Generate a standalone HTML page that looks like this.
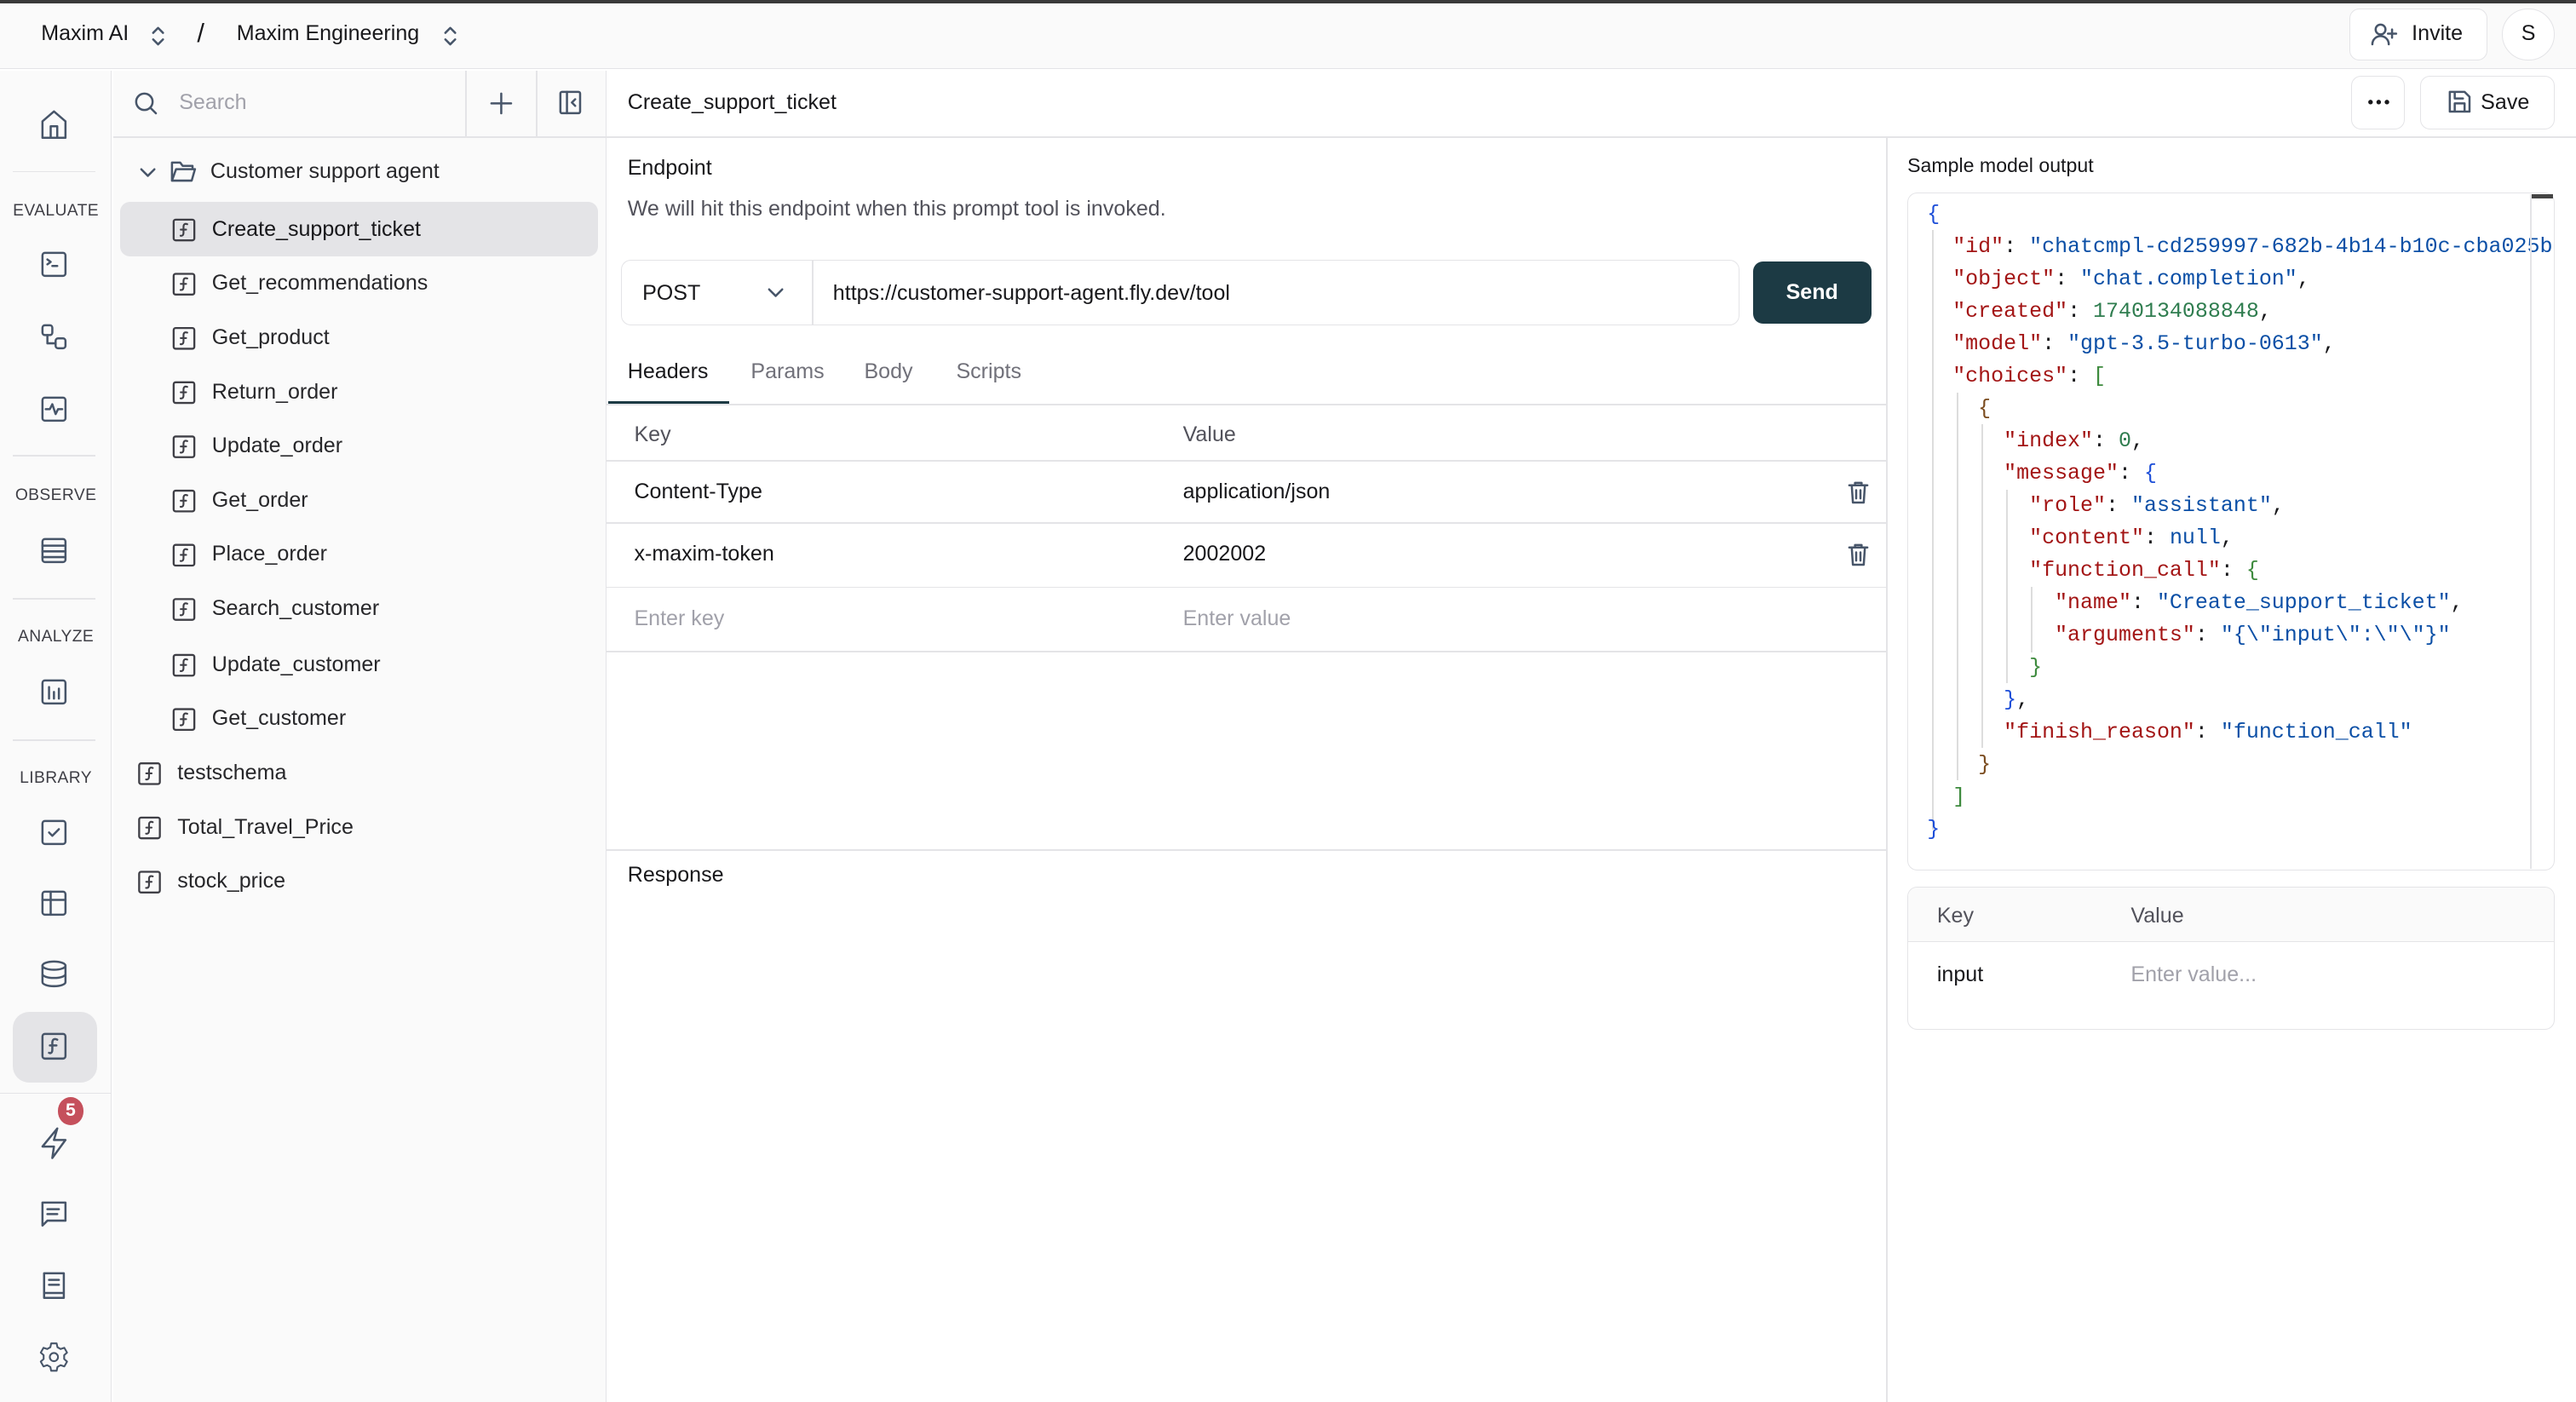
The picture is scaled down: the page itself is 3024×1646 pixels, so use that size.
<!DOCTYPE html>
<html><head><meta charset="utf-8"><style>
*{box-sizing:border-box;margin:0;padding:0}
html,body{width:3024px;height:1646px;overflow:hidden;background:#fff}
#r{zoom:1.9286;width:1568px;height:853.5px;position:relative;font-family:"Liberation Sans",sans-serif;color:#18181b;font-size:13px}
.a{position:absolute}
.ic{stroke:#475569;fill:none;stroke-width:1.3;stroke-linecap:round;stroke-linejoin:round}
.side .it{position:absolute;left:104px;font-size:13px;color:#27272a}
.lbl{position:absolute;left:0;width:68px;text-align:center;font-size:10px;color:#3f3f46;letter-spacing:.2px}
.hr{position:absolute;left:8px;width:50px;height:1px;background:#e4e4e7}
.code{position:absolute;font-family:"Liberation Mono",monospace;font-size:12.95px;line-height:19.7px;white-space:pre;color:#18181b}
.k{color:#a31515}.s{color:#0b4fa6}.n{color:#2f7d4f}.b1{color:#1d4ed8}.b2{color:#7a4b1e}.b3{color:#3d8a3d}
</style></head><body><div id="r">
<div class="a" style="left:0;top:0;width:1568px;height:2px;background:#3a3a3a"></div>
<div class="a" style="left:0;top:2px;width:1568px;height:40px;background:#fafafa;border-bottom:1px solid #e4e4e7"></div>
<div class="a" style="left:25px;top:13px;font-size:13px;font-weight:500">Maxim AI</div>
<svg class="a" style="left:90px;top:14px" width="12" height="16" viewBox="0 0 12 16"><path class="ic" d="M3 6l3-3 3 3M3 10l3 3 3-3"/></svg>
<div class="a" style="left:120px;top:11px;font-size:16px">/</div>
<div class="a" style="left:144px;top:13px;font-size:13px;font-weight:500">Maxim Engineering</div>
<svg class="a" style="left:268px;top:14px" width="12" height="16" viewBox="0 0 12 16"><path class="ic" d="M3 6l3-3 3 3M3 10l3 3 3-3"/></svg>
<div class="a" style="left:1430px;top:5px;width:84px;height:32px;border:1px solid #e4e4e7;border-radius:6px;background:#fff"></div>
<svg class="a" style="left:1443px;top:13px" width="17" height="16" viewBox="0 0 17 16"><circle class="ic" stroke="#18181b" cx="6" cy="5" r="3"/><path class="ic" stroke="#18181b" d="M1 14c0-3 2.5-5 5-5s5 2 5 5M13 5v5M10.5 7.5h5"/></svg>
<div class="a" style="left:1468px;top:13px;font-size:13px;font-weight:500">Invite</div>
<div class="a" style="left:1523px;top:5px;width:32px;height:32px;border:1px solid #e4e4e7;border-radius:50%;background:#fff;text-align:center;line-height:30px;font-size:13px;font-weight:500">S</div>

<div class="a" style="left:0;top:43px;width:68px;height:811px;background:#fafafa;border-right:1px solid #e4e4e7"></div>
<svg class="a" style="left:24px;top:66px" width="18" height="20" viewBox="0 0 18 20"><path class="ic" d="M2 8l7-6 7 6v10H2zM7 18v-7h4v7"/></svg>
<div class="hr" style="top:104px"></div>
<div class="lbl" style="top:123px">EVALUATE</div>
<svg class="a" style="left:24px;top:152px" width="18" height="18" viewBox="0 0 18 18"><rect class="ic" x="2" y="2" width="14" height="14" rx="1.5"/><path class="ic" d="M5 6l2 1.5L5 9M8 10h3"/></svg>
<svg class="a" style="left:24px;top:196px" width="18" height="18" viewBox="0 0 18 18"><rect class="ic" x="2" y="2" width="6" height="6" rx="1.5"/><rect class="ic" x="10" y="10" width="6" height="6" rx="1.5"/><path class="ic" d="M5 8v5h5"/></svg>
<svg class="a" style="left:24px;top:240px" width="18" height="18" viewBox="0 0 18 18"><rect class="ic" x="2" y="2" width="14" height="14" rx="1.5"/><path class="ic" d="M4 9h2.5l1.5-3 2 6 1.5-3H14"/></svg>
<div class="hr" style="top:277px"></div>
<div class="lbl" style="top:296px">OBSERVE</div>
<svg class="a" style="left:24px;top:326px" width="18" height="18" viewBox="0 0 18 18"><rect class="ic" x="2" y="2" width="14" height="14" rx="1.5"/><path class="ic" d="M2 6h14M2 9.5h14M2 13h14"/></svg>
<div class="hr" style="top:364px"></div>
<div class="lbl" style="top:382px">ANALYZE</div>
<svg class="a" style="left:24px;top:412px" width="18" height="18" viewBox="0 0 18 18"><rect class="ic" x="2" y="2" width="14" height="14" rx="1.5"/><path class="ic" d="M6 6v7M9 9v4M12 7v6"/></svg>
<div class="hr" style="top:450px"></div>
<div class="lbl" style="top:468px">LIBRARY</div>
<svg class="a" style="left:24px;top:498px" width="18" height="18" viewBox="0 0 18 18"><rect class="ic" x="2" y="2" width="14" height="14" rx="1.5"/><path class="ic" d="M6 9l2 2 4-4"/></svg>
<svg class="a" style="left:24px;top:541px" width="18" height="18" viewBox="0 0 18 18"><rect class="ic" x="2" y="2" width="14" height="14" rx="1.5"/><path class="ic" d="M2 7h14M7 2v14"/></svg>
<svg class="a" style="left:24px;top:584px" width="18" height="18" viewBox="0 0 18 18"><ellipse class="ic" cx="9" cy="4" rx="7" ry="2.5"/><path class="ic" d="M2 4v10c0 1.4 3 2.5 7 2.5s7-1.1 7-2.5V4M2 9c0 1.4 3 2.5 7 2.5s7-1.1 7-2.5"/></svg>
<div class="a" style="left:8px;top:616px;width:51px;height:43px;background:#e4e4e7;border-radius:10px"></div>
<svg class="a" style="left:24px;top:628px" width="18" height="18" viewBox="0 0 18 18"><rect class="ic" x="2" y="1.5" width="14" height="15" rx="1.5"/><path class="ic" d="M11 5c-2-1-3 0-3 2v4c0 2-1 2.5-2 2M6.5 8.5h4"/></svg>
<div class="a" style="left:0;top:665px;width:68px;height:1px;background:#e4e4e7"></div>
<div class="a" style="left:35px;top:668px;width:16px;height:17px;border-radius:50%;background:#c5505c;color:#fff;font-size:11px;font-weight:bold;text-align:center;line-height:17px">5</div>
<svg class="a" style="left:24px;top:685px" width="18" height="22" viewBox="0 0 18 22"><path class="ic" d="M11 2L2 13h7l-1 7 8-11H9z"/></svg>
<svg class="a" style="left:24px;top:730px" width="18" height="18" viewBox="0 0 18 18"><path class="ic" d="M2 2h14v11H5l-3 3zM5 6h7M5 9h6"/></svg>
<svg class="a" style="left:24px;top:773px" width="18" height="19" viewBox="0 0 18 19"><path class="ic" d="M3 2h12v15H3zM3 14h12M6 6h6M6 9h6"/></svg>
<svg class="a" style="left:23px;top:816px" width="20" height="20" viewBox="0 0 24 24"><path class="ic" d="M10 2h4l.6 2.8 2.3 1.3 2.7-.9 2 3.5-2.1 1.9v2.8l2.1 1.9-2 3.5-2.7-.9-2.3 1.3L14 22h-4l-.6-2.8-2.3-1.3-2.7.9-2-3.5 2.1-1.9v-2.8L2.4 8.7l2-3.5 2.7.9 2.3-1.3z"/><circle class="ic" cx="12" cy="12" r="3"/></svg>

<div class="a" style="left:69px;top:43px;width:300px;height:811px;background:#fafafa;border-right:1px solid #e4e4e7"></div>
<div class="a" style="left:69px;top:83px;width:300px;height:1px;background:#e4e4e7"></div>
<div class="a" style="left:283px;top:43px;width:1px;height:40px;background:#e4e4e7"></div>
<div class="a" style="left:326px;top:43px;width:1px;height:40px;background:#e4e4e7"></div>
<svg class="a" style="left:81px;top:55px" width="16" height="16" viewBox="0 0 16 16"><circle class="ic" stroke="#18181b" stroke-width="1.5" cx="7" cy="7" r="5"/><path class="ic" stroke="#18181b" stroke-width="1.5" d="M11 11l3 3"/></svg>
<div class="a" style="left:109px;top:55px;color:#a1a1aa;font-size:13px">Search</div>
<svg class="a" style="left:297px;top:55px" width="16" height="16" viewBox="0 0 16 16"><path class="ic" stroke="#18181b" stroke-width="1.5" d="M8 2v12M2 8h12"/></svg>
<svg class="a" style="left:339px;top:54px" width="16" height="17" viewBox="0 0 16 17"><rect class="ic" stroke="#18181b" stroke-width="1.4" x="2" y="2" width="12" height="13" rx="1"/><path class="ic" stroke="#18181b" stroke-width="1.4" d="M6 2v13M11 6.5L9 8.5l2 2"/></svg>
<div class="side">
<svg class="a" style="left:84px;top:99px" width="12" height="12" viewBox="0 0 12 12"><path class="ic" d="M2 4l4 4 4-4"/></svg>
<svg class="a" style="left:103px;top:97px" width="17" height="15" viewBox="0 0 17 15"><path class="ic" d="M1.5 2h5l1.5 2h6v2M1.5 2v11h12l2-7H4l-2.5 7"/></svg>
<div class="it" style="left:128px;top:97px">Customer support agent</div>
<div class="a" style="left:73px;top:123px;width:291px;height:33px;background:#e4e4e7;border-radius:6px"></div>
<div class="it" style="left:129px;top:132px;color:#18181b;font-weight:500">Create_support_ticket</div>
<div class="it" style="left:129px;top:165px">Get_recommendations</div>
<div class="it" style="left:129px;top:198px">Get_product</div>
<div class="it" style="left:129px;top:231px">Return_order</div>
<div class="it" style="left:129px;top:264px">Update_order</div>
<div class="it" style="left:129px;top:297px">Get_order</div>
<div class="it" style="left:129px;top:330px">Place_order</div>
<div class="it" style="left:129px;top:363px">Search_customer</div>
<div class="it" style="left:129px;top:397px">Update_customer</div>
<div class="it" style="left:129px;top:430px">Get_customer</div>
<div class="it" style="left:108px;top:463px">testschema</div>
<div class="it" style="left:108px;top:496px">Total_Travel_Price</div>
<div class="it" style="left:108px;top:529px">stock_price</div>
</div>
<svg class="a" style="left:0;top:0" width="368" height="560" viewBox="0 0 368 560">
<defs><g id="f"><rect x="0.7" y="0.7" width="12.6" height="12.6" rx="1.2" fill="none" stroke="#3f3f46" stroke-width="1.2"/><path d="M9 3.5c-1.6-.6-2.3.2-2.3 1.6v3.6c0 1.5-.8 2-1.8 1.8M5 6.8h3.3" fill="none" stroke="#3f3f46" stroke-width="1.1" stroke-linecap="round"/></g></defs>
<use href="#f" x="105" y="133"/><use href="#f" x="105" y="166"/><use href="#f" x="105" y="199"/><use href="#f" x="105" y="232"/><use href="#f" x="105" y="265"/><use href="#f" x="105" y="298"/><use href="#f" x="105" y="331"/><use href="#f" x="105" y="364"/><use href="#f" x="105" y="398"/><use href="#f" x="105" y="431"/><use href="#f" x="84" y="464"/><use href="#f" x="84" y="497"/><use href="#f" x="84" y="530"/>
</svg>

<div class="a" style="left:369px;top:83px;width:1199px;height:1px;background:#e4e4e7"></div>
<div class="a" style="left:382px;top:55px;font-size:13px;font-weight:500">Create_support_ticket</div>
<div class="a" style="left:1431px;top:46px;width:33px;height:33px;border:1px solid #e4e4e7;border-radius:6px"></div>
<svg class="a" style="left:1440px;top:60px" width="16" height="4" viewBox="0 0 16 4"><circle cx="3" cy="2" r="1.4" fill="#18181b"/><circle cx="8" cy="2" r="1.4" fill="#18181b"/><circle cx="13" cy="2" r="1.4" fill="#18181b"/></svg>
<div class="a" style="left:1473px;top:46px;width:82px;height:33px;border:1px solid #e4e4e7;border-radius:6px"></div>
<svg class="a" style="left:1489px;top:54px" width="16" height="16" viewBox="0 0 16 16"><path class="ic" stroke="#18181b" stroke-width="1.4" d="M2 2h9l3 3v9H2zM5 2v4h5M5 14V9h6v5"/></svg>
<div class="a" style="left:1510px;top:55px;font-size:13px;font-weight:500">Save</div>

<div class="a" style="left:382px;top:95px;font-size:13px;font-weight:500">Endpoint</div>
<div class="a" style="left:382px;top:120px;font-size:13px;color:#52525b">We will hit this endpoint when this prompt tool is invoked.</div>
<div class="a" style="left:378px;top:158px;width:681px;height:40px;border:1px solid #e4e4e7;border-radius:6px"></div>
<div class="a" style="left:494px;top:158px;width:1px;height:40px;background:#e4e4e7"></div>
<div class="a" style="left:391px;top:171px;font-size:13px">POST</div>
<svg class="a" style="left:466px;top:172px" width="12" height="12" viewBox="0 0 12 12"><path class="ic" d="M2 4l4 4 4-4"/></svg>
<div class="a" style="left:507px;top:171px;font-size:13px">https://customer-support-agent.fly.dev/tool</div>
<div class="a" style="left:1067px;top:159px;width:72px;height:38px;background:#1c3a44;border-radius:6px;color:#fff;font-weight:bold;font-size:13px;text-align:center;line-height:38px">Send</div>

<div class="a" style="left:369px;top:246px;width:779px;height:1px;background:#e4e4e7"></div>
<div class="a" style="left:382px;top:219px;font-size:13px;font-weight:500">Headers</div>
<div class="a" style="left:370px;top:244px;width:74px;height:2px;background:#1c3a44"></div>
<div class="a" style="left:457px;top:219px;font-size:13px;color:#71717a">Params</div>
<div class="a" style="left:526px;top:219px;font-size:13px;color:#71717a">Body</div>
<div class="a" style="left:582px;top:219px;font-size:13px;color:#71717a">Scripts</div>
<div class="a" style="left:369px;top:280px;width:779px;height:1px;background:#e4e4e7"></div>
<div class="a" style="left:369px;top:318px;width:779px;height:1px;background:#e4e4e7"></div>
<div class="a" style="left:369px;top:357px;width:779px;height:1px;background:#e4e4e7"></div>
<div class="a" style="left:369px;top:396px;width:779px;height:1px;background:#e4e4e7"></div>
<div class="a" style="left:386px;top:257px;font-size:13px;color:#52525b">Key</div>
<div class="a" style="left:720px;top:257px;font-size:13px;color:#52525b">Value</div>
<div class="a" style="left:386px;top:292px;font-size:13px">Content-Type</div>
<div class="a" style="left:720px;top:292px;font-size:13px">application/json</div>
<div class="a" style="left:386px;top:330px;font-size:13px">x-maxim-token</div>
<div class="a" style="left:720px;top:330px;font-size:13px">2002002</div>
<div class="a" style="left:386px;top:369px;font-size:13px;color:#a1a1aa">Enter key</div>
<div class="a" style="left:720px;top:369px;font-size:13px;color:#a1a1aa">Enter value</div>
<svg class="a" style="left:1124px;top:292px" width="14" height="16" viewBox="0 0 14 16"><path class="ic" d="M1.5 3.5h11M5 3.5V2h4v1.5M3 3.5l.7 10.5h6.6L11 3.5M5.7 6.5v5M8.3 6.5v5"/></svg>
<svg class="a" style="left:1124px;top:330px" width="14" height="16" viewBox="0 0 14 16"><path class="ic" d="M1.5 3.5h11M5 3.5V2h4v1.5M3 3.5l.7 10.5h6.6L11 3.5M5.7 6.5v5M8.3 6.5v5"/></svg>
<div class="a" style="left:369px;top:517px;width:779px;height:1px;background:#e4e4e7"></div>
<div class="a" style="left:382px;top:525px;font-size:13px;font-weight:500">Response</div>

<div class="a" style="left:1148px;top:84px;width:1px;height:770px;background:#e4e4e7"></div>
<div class="a" style="left:1161px;top:94px;font-size:12px;font-weight:500">Sample model output</div>
<div class="a" style="left:1161px;top:117px;width:394px;height:413px;border:1px solid #e4e4e7;border-radius:6px;overflow:hidden"></div>
<div class="a" style="left:1541px;top:118px;width:13px;height:3px;background:#444"></div>
<div class="a" style="left:1176px;top:140px;width:1px;height:365px;background:#ddd"></div>
<div class="a" style="left:1191px;top:239px;width:1px;height:236px;background:#ddd"></div>
<div class="a" style="left:1206px;top:258px;width:1px;height:197px;background:#ddd"></div>
<div class="a" style="left:1221px;top:298px;width:1px;height:118px;background:#ddd"></div>
<div class="a" style="left:1236px;top:357px;width:1px;height:40px;background:#ddd"></div>
<div style="position:absolute;left:1162px;top:118px;width:392px;height:410px;overflow:hidden"><div class="code" style="left:11px;top:3px"><span class="b1">{</span>
  <span class="k">"id"</span>: <span class="s">"chatcmpl-cd259997-682b-4b14-b10c-cba025b</span>
  <span class="k">"object"</span>: <span class="s">"chat.completion"</span>,
  <span class="k">"created"</span>: <span class="n">1740134088848</span>,
  <span class="k">"model"</span>: <span class="s">"gpt-3.5-turbo-0613"</span>,
  <span class="k">"choices"</span>: <span class="b3">[</span>
    <span class="b2">{</span>
      <span class="k">"index"</span>: <span class="n">0</span>,
      <span class="k">"message"</span>: <span class="b1">{</span>
        <span class="k">"role"</span>: <span class="s">"assistant"</span>,
        <span class="k">"content"</span>: <span class="s">null</span>,
        <span class="k">"function_call"</span>: <span class="b3">{</span>
          <span class="k">"name"</span>: <span class="s">"Create_support_ticket"</span>,
          <span class="k">"arguments"</span>: <span class="s">"{\"input\":\"\"}"</span>
        <span class="b3">}</span>
      <span class="b1">}</span>,
      <span class="k">"finish_reason"</span>: <span class="s">"function_call"</span>
    <span class="b2">}</span>
  <span class="b3">]</span>
<span class="b1">}</span></div></div>
<div class="a" style="left:1540px;top:118px;width:1px;height:411px;background:#e4e4e7"></div>
<div class="a" style="left:1161px;top:540px;width:394px;height:87px;border:1px solid #e4e4e7;border-radius:6px;overflow:hidden"><div style="height:33px;background:#fafafa;border-bottom:1px solid #e4e4e7"></div></div>
<div class="a" style="left:1179px;top:550px;font-size:13px;color:#52525b">Key</div>
<div class="a" style="left:1297px;top:550px;font-size:13px;color:#52525b">Value</div>
<div class="a" style="left:1179px;top:586px;font-size:13px">input</div>
<div class="a" style="left:1297px;top:586px;font-size:13px;color:#a1a1aa">Enter value...</div>
</div></body></html>
